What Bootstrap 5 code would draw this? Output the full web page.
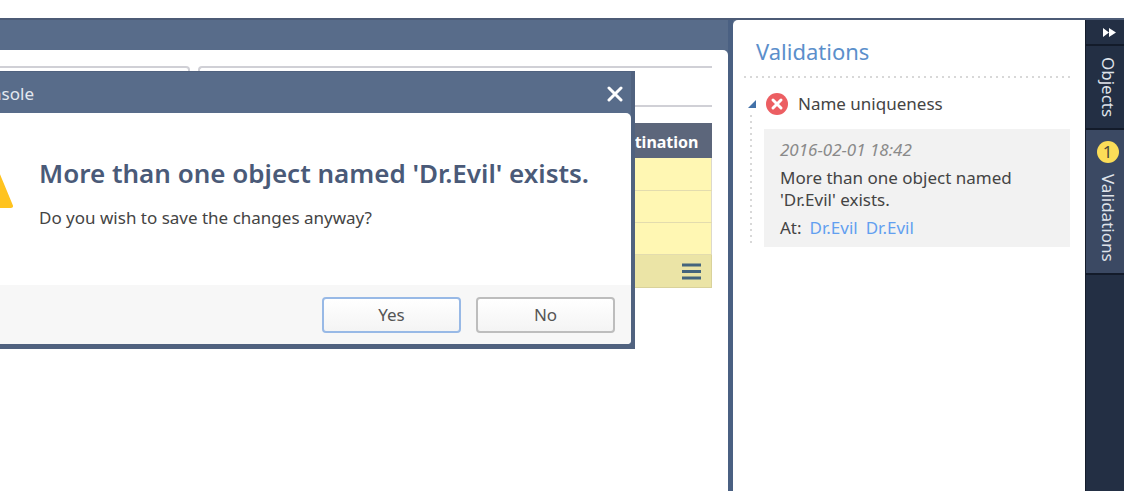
<!DOCTYPE html>
<html lang="en">
<head>
<meta charset="utf-8">
<meta name="viewport" content="width=device-width, initial-scale=1">
<title>Console</title>
<link href="https://cdn.jsdelivr.net/npm/bootstrap@5.3.0/dist/css/bootstrap.min.css" rel="stylesheet">
<style>
  body { font-family: "Noto Sans", "Open Sans", sans-serif; font-size: 17px; line-height: 22px; color: #444; background: #fff; }
  .app-shell { padding-top: 18px; }
  .app-frame { background: #586c8a; border-top: 2px solid #4c5b76; }
  .workspace-wrap { padding-top: 30px; border-right: 5px solid #4a6082; min-width: 0; }
  .workspace { background: #fff; border-top-right-radius: 5px; padding: 16px 16px 0 0; }
  .box-a, .box-b { height: 41px; border: 2px solid #d0d0d6; border-left: 0; }
  .box-a { width: 190px; border-radius: 0 4px 4px 0; }
  .box-b { border-left: 2px solid #d0d0d6; border-right: 0; border-radius: 4px 0 0 4px; }
  .grid-table { margin-top: 16px; }
  .grid-table th { height: 35px; padding: 2px 13px 0 0; background: #5c667b; color: #fff; text-align: right; font-size: 16px; }
  .grid-table td { height: 32px; padding: 0; background: #fff7b3; border: 0 solid #e3dcae; border-right: 1px solid #dcd9cc; border-bottom-width: 1px; }
  .grid-table tfoot td { height: 33px; padding: 0 10px 0 0; background: #ebe4a6; border: 1px solid #d9d29b; text-align: right; }
  .grid-table tfoot button { vertical-align: middle; }
  .plain-btn { border: 0; background: none; padding: 0; color: inherit; display: inline-flex; align-items: center; justify-content: center; }

  .msg-dialog { left: -60px; right: 93px; top: 51px; background: #586c8a; border: solid #50627f; border-width: 1px 4px 5px 0; }
  .msg-title { height: 41px; padding: 2px 8px 0 0; color: #e3e8f0; }
  .msg-title span { width: 94px; text-align: right; }
  .msg-sheet { background: #fff; border-radius: 0 5px 4px 0; overflow: hidden; }
  .msg-body { height: 172px; padding: 42px 30px 0 26px; gap: 25px; }
  .msg-body h1 { font-size: 26px; line-height: 36px; font-weight: 600; color: #4a5a78; margin: 0 0 16px; white-space: nowrap; }
  .msg-foot { background: #f7f7f7; padding: 12px 16px 11px; gap: 15px; }
  .msg-foot .btn { width: 139px; height: 36px; padding: 0; font-size: 17px; color: #555; border: 2px solid #bdbdbd; border-radius: 4px; background: linear-gradient(#fff, #f4f4f4); }
  .msg-foot .btn-focus { border-color: #98b9e6; }

  .side-panel { width: 352px; background: #fff; border-top-left-radius: 5px; padding: 16px 13px 0 11px; }
  .side-panel h2 { font-size: 22px; line-height: 30px; font-weight: 400; color: #5b8fcb; margin: 0; padding: 0 0 10px 12px; }
  .dots-h { height: 2px; background: repeating-linear-gradient(90deg, #d8d8d8 0 2px, transparent 2px 6px); }
  .rule-head { margin-top: 14px; padding-left: 4px; height: 24px; }
  .rule-item { margin-left: 6px; padding-left: 14px; }
  .rule-item::before { content: ""; position: absolute; left: 0; top: -14px; bottom: 0; width: 2px; background: repeating-linear-gradient(#d8d8d8 0 2px, transparent 2px 6px); }
  .rule-card { background: #f2f2f2; margin: 13px 2px 0 0; padding: 10px 40px 8px 16px; gap: 6px; }
  .rule-card time { color: #8a8a8a; font-style: italic; }
  .rule-card a { color: #629ff0; text-decoration: none; margin-left: 8px; }

  .tab-rail { width: 39px; background: #232f44; border-left: 1px solid #151d2c; }
  .tab-rail button { color: #dfe3ea; }
  .rail-arrows { height: 26px; padding-left: 8px; border-bottom: 2px solid #131b2a; }
  .rail-tab { writing-mode: vertical-rl; padding: 11px 0 11px 5px; gap: 11px; border-bottom: 2px solid #131b2a; }
  .rail-tab.tab-on { background: #3b4963; }
  .tab-count { writing-mode: horizontal-tb; width: 22px; height: 22px; border-radius: 50%; background: #fbdd58; color: #4b4a3c; text-align: center; }
</style>
</head>
<body>
<div class="app-shell d-flex vh-100 overflow-hidden">
  <div class="app-frame d-flex flex-grow-1 position-relative">
    <main class="workspace-wrap flex-grow-1 d-flex position-relative">
      <div class="workspace flex-grow-1">
        <div class="d-flex gap-2">
          <div class="box-a"></div>
          <div class="box-b flex-grow-1"></div>
        </div>
        <table class="grid-table w-100">
          <thead><tr><th scope="col">Destination</th></tr></thead>
          <tbody><tr><td></td></tr><tr><td></td></tr><tr><td></td></tr></tbody>
          <tfoot><tr><td><button class="plain-btn" aria-label="Menu"><svg width="19" height="17" viewBox="0 0 19 17"><path d="M0 2h19M0 8.500h19M0 15h19" stroke="#44647d" stroke-width="3"/></svg></button></td></tr></tfoot>
        </table>
      </div>

      <section class="msg-dialog position-absolute" role="dialog" aria-labelledby="msgTitle">
        <header class="msg-title d-flex align-items-center justify-content-between">
          <span>Console</span>
          <button class="plain-btn" aria-label="Close"><svg width="16" height="16" viewBox="0 0 16 16"><path d="M2 2l12 12M14 2L2 14" stroke="#fff" stroke-width="3" stroke-linecap="round"/></svg></button>
        </header>
        <div class="msg-sheet">
          <div class="msg-body d-flex align-items-start">
            <svg class="flex-shrink-0" width="48" height="54" viewBox="0 0 48 54"><path d="M1 51L22 5L26 5L45 51Z" fill="#ffc31f" stroke="#ffc31f" stroke-width="4" stroke-linejoin="round"/></svg>
            <div>
              <h1 id="msgTitle">More than one object named 'Dr.Evil' exists.</h1>
              <div>Do you wish to save the changes anyway?</div>
            </div>
          </div>
          <footer class="msg-foot d-flex justify-content-end">
            <button class="btn btn-focus">Yes</button>
            <button class="btn">No</button>
          </footer>
        </div>
      </section>
    </main>

    <aside class="side-panel flex-shrink-0">
      <h2>Validations</h2>
      <div class="dots-h"></div>
      <div class="rule-head d-flex align-items-center">
        <svg width="8" height="8" viewBox="0 0 8 8"><path d="M8 0V8H0Z" fill="#4271a8"/></svg>
        <svg class="ms-2 me-2" width="26" height="22" viewBox="0 0 26 22"><circle cx="13" cy="11" r="11" fill="#ec5e62"/><path d="M9 7l8 8M17 7l-8 8" stroke="#fff" stroke-width="3" stroke-linecap="round"/></svg>
        <span>Name uniqueness</span>
      </div>
      <div class="rule-item position-relative">
        <div class="rule-card d-flex flex-column">
          <time datetime="2016-02-01T18:42">2016-02-01 18:42</time>
          <div>More than one object named 'Dr.Evil' exists.</div>
          <div>At:<a href="#">Dr.Evil</a><a href="#">Dr.Evil</a></div>
        </div>
      </div>
    </aside>

    <nav class="tab-rail d-flex flex-column flex-shrink-0" aria-label="Panels">
      <button class="plain-btn rail-arrows" aria-label="Collapse"><svg width="13" height="9" viewBox="0 0 13 9"><path d="M0 0L6 4.500L0 9ZM6 0L13 4.500L6 9Z" fill="#fff"/></svg></button>
      <button class="plain-btn rail-tab">Objects</button>
      <button class="plain-btn rail-tab tab-on"><span class="tab-count">1</span>Validations</button>
    </nav>
  </div>
</div>
<script src="https://cdn.jsdelivr.net/npm/bootstrap@5.3.0/dist/js/bootstrap.bundle.min.js"></script>
</body>
</html>
